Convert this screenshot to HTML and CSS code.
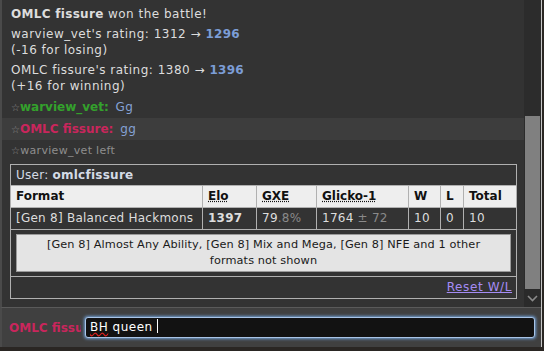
FILE: index.html
```html
<!DOCTYPE html>
<html lang="en">

<head>
  <meta charset="UTF-8">
  <meta name="viewport" content="width=device-width, initial-scale=1.0">
  <title>Battle chat</title>
  <link rel="stylesheet" href="styles.css">
</head>

<body>
  <div class="room">
    <div class="main">
      <div class="log">
        <div class="msg cut">The battle timer is stopping, good game</div>
        <div class="msg win"><strong>OMLC fissure</strong> won the battle!</div>
        <div class="msg">warview_vet's rating: 1312 &rarr; <strong class="rating">1296</strong><br>(-16 for losing)</div>
        <div class="msg">OMLC fissure's rating: 1380 &rarr; <strong class="rating">1396</strong><br>(+16 for winning)</div>
        <div class="chat"><small>&#9734;</small><strong class="green">warview_vet:</strong> <em>Gg</em></div>
        <div class="chat mine"><small>&#9734;</small><strong class="red">OMLC fissure:</strong> <em>gg</em></div>
        <div class="leave"><small>&#9734;</small>warview_vet left</div>

        <table class="stats">
          <colgroup>
            <col class="c-format">
            <col class="c-elo">
            <col class="c-gxe">
            <col class="c-glicko">
            <col class="c-w">
            <col class="c-l">
            <col class="c-total">
          </colgroup>
          <tr>
            <td colspan="7" class="user">User: <strong>omlcfissure</strong></td>
          </tr>
          <tr class="head">
            <th>Format</th>
            <th><abbr>Elo</abbr></th>
            <th><abbr>GXE</abbr></th>
            <th><abbr>Glicko-1</abbr></th>
            <th>W</th>
            <th>L</th>
            <th>Total</th>
          </tr>
          <tr>
            <td>[Gen 8] Balanced Hackmons</td>
            <td><strong>1397</strong></td>
            <td>79<span class="dim">.8%</span></td>
            <td>1764<span class="dim"> &plusmn; 72</span></td>
            <td>10</td>
            <td>0</td>
            <td>10</td>
          </tr>
          <tr>
            <td colspan="7" class="others">
              <div class="others-btn">[Gen 8] Almost Any Ability, [Gen 8] Mix and Mega, [Gen 8] NFE and 1 other<br>formats not shown</div>
            </td>
          </tr>
          <tr>
            <td colspan="7" class="reset"><a href="#">Reset W/L</a></td>
          </tr>
        </table>
      </div>

      <div class="scrollbar">
        <div class="track"><div class="thumb"></div></div>
        <div class="arrow">
          <svg width="11" height="7" viewBox="0 0 11 7"><polyline points="1,1 5.5,5.5 10,1" fill="none" stroke="#8a8a8a" stroke-width="1.6"/></svg>
        </div>
      </div>
    </div>

    <div class="chatbar">
      <div class="name">OMLC fissure</div>
      <div class="textbox"><span class="typo">BH</span> queen <span class="caret"></span></div>
    </div>
  </div>
</body>

</html>
```

FILE: styles.css
```css
/* Page */
body {
  margin: 0;
  height: 351px;
  overflow: hidden;
  background: #2a2623;
  font-family: "DejaVu Sans", Verdana, sans-serif;
  font-size: 12px;
  color: #dddddd;
}

.room {
  width: 541px;
  height: 347px;
  border-right: 1px solid #c8c8c8;
  display: flex;
  flex-direction: column;
}

.main {
  height: 307px;
  display: flex;
}

/* Chat log */
.log {
  flex: 1;
  background: #333333;
  border-left: 2px solid #4a4a4a;
  overflow: hidden;
  display: flex;
  flex-direction: column;
  justify-content: flex-end;
  padding-bottom: 8px;
}

.msg {
  padding: 2px 9px;
  line-height: 16px;
  letter-spacing: 0.5px;
}

.msg strong {
  letter-spacing: 0.3px;
}

.msg.cut {
  padding-bottom: 0;
  white-space: nowrap;
}

.msg.win {
  padding-top: 8px;
}

.rating {
  color: #7c9dd6;
}

.chat {
  padding: 3px 9px 2px;
  line-height: 16px;
}

.chat.mine {
  background: #3d3d3d;
}

.chat small,
.leave small {
  font-size: 10px;
  color: #8a8a8a;
}

.chat em {
  font-style: normal;
  color: #85a2d6;
  padding-left: 3px;
  letter-spacing: 0.4px;
}

.green {
  color: #34a12c;
}

.red {
  color: #c9265c;
}

.leave {
  padding: 4px 9px 2px;
  line-height: 14px;
  font-size: 11px;
  letter-spacing: 0.3px;
  color: #8e8e8e;
}

/* Ladder stats box */
.stats {
  margin: 4px 9px 0 8px;
  width: 506px;
  table-layout: fixed;
  border-collapse: collapse;
  border: 1px solid #b0b0b0;
  font-size: 12px;
}

.stats td,
.stats th {
  border: 1px solid #b0b0b0;
  padding: 3px 5px;
  line-height: 15px;
  text-align: left;
  white-space: nowrap;
  letter-spacing: 0.25px;
}

.c-format { width: 192px; }
.c-elo { width: 54px; }
.c-gxe { width: 60px; }
.c-glicko { width: 92px; }
.c-w { width: 32px; }
.c-l { width: 23px; }
.c-total { width: 53px; }

.stats .user {
  padding: 3px 5px 2px;
  color: #d4dbe6;
}

.head th {
  background: #eeeeee;
  color: #111111;
  font-weight: bold;
  letter-spacing: 0;
}

abbr {
  text-decoration: underline dotted;
}

.dim {
  color: #8a8a8a;
}

.stats .others {
  padding: 4px 5px 4px 5px;
  white-space: normal;
}

.others-btn {
  background: #e4e4e4;
  border: 1px solid #9a9a9a;
  color: #1a1a1a;
  text-align: center;
  font-size: 11.3px;
  letter-spacing: 0.1px;
  line-height: 16px;
  padding: 2px 4px;
}

.stats .reset {
  text-align: right;
  padding: 3px 4px 3px 5px;
  letter-spacing: 0.6px;
}

.reset a {
  color: #a58cf5;
}

/* Scrollbar */
.scrollbar {
  width: 17px;
  background: #2c2c2c;
  display: flex;
  flex-direction: column;
}

.track {
  flex: 1;
  padding: 116px 1px 0 1px;
}

.thumb {
  height: 173px;
  background: #808080;
}

.arrow {
  height: 18px;
  background: #2a2a2a;
  display: flex;
  align-items: center;
  justify-content: center;
}

/* Chat bar */
.chatbar {
  flex: 1;
  background: #404040;
  border-top: 1px solid #5a5a5a;
  border-left: 2px solid #4a4a4a;
  display: flex;
  align-items: center;
  padding-left: 7px;
}

.name {
  width: 72px;
  overflow: hidden;
  white-space: nowrap;
  color: #c9265c;
  font-weight: bold;
}

.textbox {
  margin-left: 4px;
  width: 440px;
  height: 19px;
  line-height: 18px;
  padding: 0 4px;
  background: #121212;
  border: 1px solid #a9c4e6;
  border-radius: 3px;
  box-shadow: 0 0 3px 1px #6f9ccf;
  color: #ffffff;
  white-space: nowrap;
  letter-spacing: 0.5px;
}

.typo {
  text-decoration: underline wavy #e02020;
}

.caret {
  display: inline-block;
  width: 1px;
  height: 14px;
  background: #ffffff;
  vertical-align: -2px;
}
```
